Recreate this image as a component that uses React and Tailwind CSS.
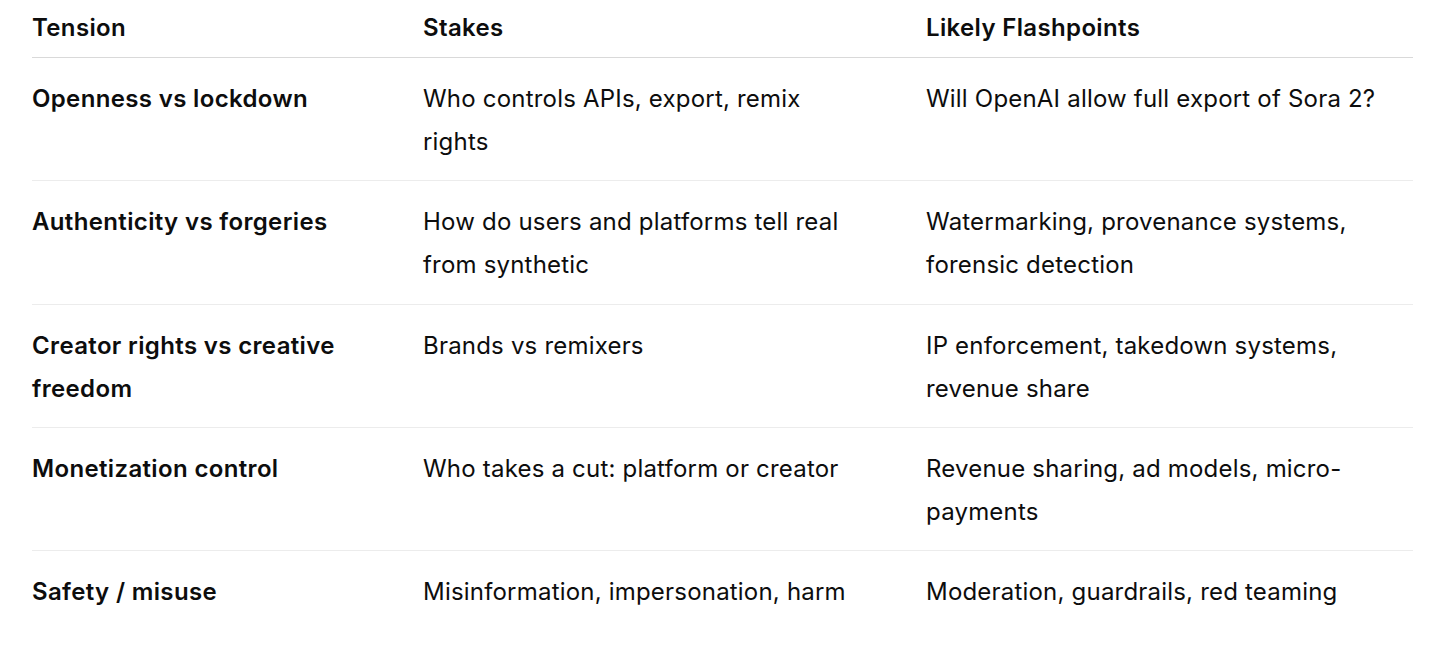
import React from "react";

const rows = [
  {
    tension: "Openness vs lockdown",
    stakes: "Who controls APIs, export, remix rights",
    flashpoints: "Will OpenAI allow full export of Sora 2?",
  },
  {
    tension: "Authenticity vs forgeries",
    stakes: "How do users and platforms tell real from synthetic",
    flashpoints: "Watermarking, provenance systems, forensic detection",
  },
  {
    tension: "Creator rights vs creative freedom",
    stakes: "Brands vs remixers",
    flashpoints: "IP enforcement, takedown systems, revenue share",
  },
  {
    tension: "Monetization control",
    stakes: "Who takes a cut: platform or creator",
    flashpoints: "Revenue sharing, ad models, micro-payments",
  },
  {
    tension: "Safety / misuse",
    stakes: "Misinformation, impersonation, harm",
    flashpoints: "Moderation, guardrails, red teaming",
  },
];

function Row({ row, last }) {
  return (
    <div
      className={`grid grid-cols-[391px_503px_487px] pt-[19px] pb-[17.3px] ${
        last ? "" : "border-b border-[#ececec]"
      }`}
    >
      <div className="w-[370px] font-semibold tracking-[0.35px]">{row.tension}</div>
      <div className="w-[440px] tracking-[0.2px]">{row.stakes}</div>
      <div className="w-[480px] tracking-[0.2px]">{row.flashpoints}</div>
    </div>
  );
}

export default function App() {
  return (
    <div className="min-h-screen bg-white">
      <div
        className="w-[1381px] ml-[32px] text-[24px] leading-[43px] text-[#0d0d0d]"
        style={{ fontFamily: "Inter, 'Noto Sans', sans-serif" }}
      >
        {/* header */}
        <div className="grid grid-cols-[391px_503px_487px] pt-[6px] pb-[8px] border-b border-[#d9d9d9] font-semibold tracking-[0.35px]">
          <div>Tension</div>
          <div>Stakes</div>
          <div>Likely Flashpoints</div>
        </div>
        {rows.map((r, i) => (
          <Row key={i} row={r} last={i === rows.length - 1} />
        ))}
      </div>
    </div>
  );
}
